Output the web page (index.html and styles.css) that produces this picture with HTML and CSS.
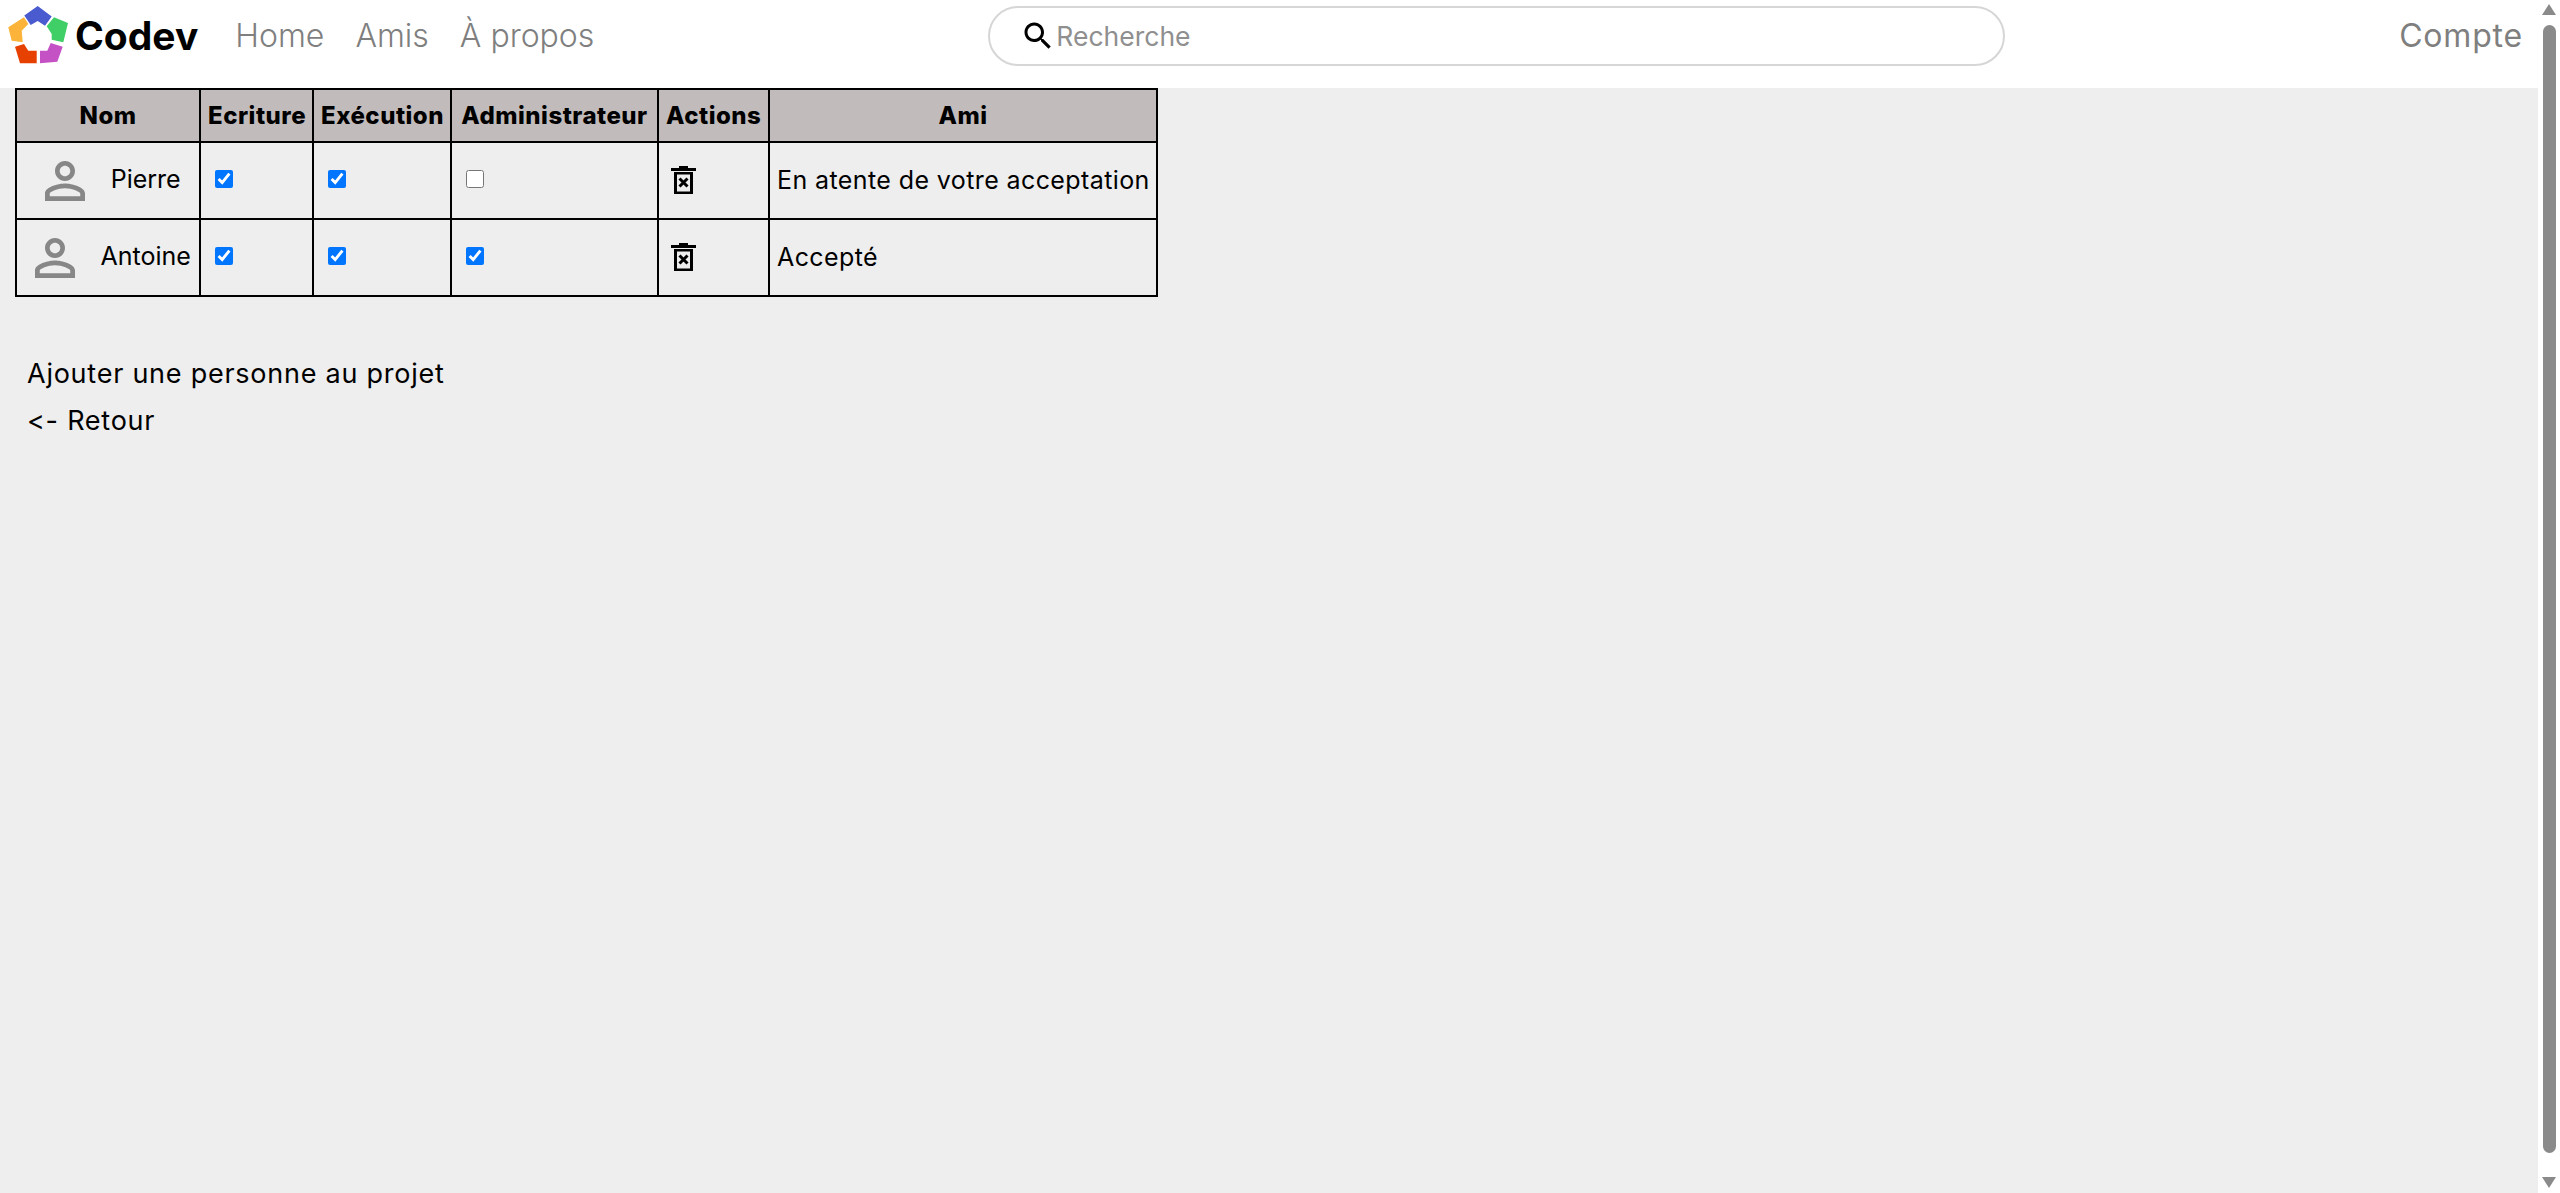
FILE: index.html
```html
<!DOCTYPE html>
<html lang="fr">
<head>
    <meta charset="UTF-8">
    <meta name="viewport" content="width=device-width, initial-scale=1.0">
    <title>Codev</title>
    <link rel="stylesheet" href="styles.css">
</head>
<body>
    <div class="page">
        <header class="navbar">
            <a class="brand" href="#">
                <svg class="brand-logo" viewBox="0 0 60 60" aria-hidden="true">
                    <polygon fill="#4a5bd0" points="29.7,0 43.7,10.5 37,19.7 29.7,15 22.7,19 16.3,9.5"/>
                    <polygon fill="#3fcf66" points="46,11.3 60,17 55.3,36.3 43.7,33.7 43.7,28 38.7,20.3"/>
                    <polygon fill="#fbb33a" points="16,11.3 20.3,18 13.7,24.7 14.7,36.3 3.7,34.7 0.3,21.3"/>
                    <polygon fill="#e64100" points="7,40.7 16,38 20.3,44.7 28.7,44.7 28.7,57.3 12,57.3"/>
                    <polygon fill="#c552c5" points="32,44.7 39.3,44.7 42.7,37 54.7,40.7 49.3,55.7 32,57.3"/>
                </svg>
                <span class="brand-name">Codev</span>
            </a>
            <nav class="nav-links">
                <a href="#">Home</a>
                <a href="#">Amis</a>
                <a href="#">À propos</a>
            </nav>
            <div class="search">
                <svg class="search-icon" viewBox="0 0 24 24" aria-hidden="true">
                    <path d="M15.5 14h-.79l-.28-.27C15.41 12.59 16 11.11 16 9.5 16 5.91 13.09 3 9.5 3S3 5.91 3 9.5 5.91 16 9.5 16c1.61 0 3.09-.59 4.23-1.57l.27.28v.79l5 4.99L20.49 19l-4.99-5zm-6 0C7.01 14 5 11.99 5 9.5S7.01 5 9.5 5 14 7.01 14 9.5 11.99 14 9.5 14z"/>
                </svg>
                <input class="search-input" type="text" placeholder="Recherche">
            </div>
            <a class="account" href="#">Compte</a>
        </header>

        <main class="content">
            <table class="members">
                <thead>
                    <tr>
                        <th class="col-name">Nom</th>
                        <th class="col-write">Ecriture</th>
                        <th class="col-exec">Exécution</th>
                        <th class="col-admin">Administrateur</th>
                        <th class="col-actions">Actions</th>
                        <th class="col-friend">Ami</th>
                    </tr>
                </thead>
                <tbody>
                    <tr>
                        <td class="member">
                            <svg class="avatar" viewBox="0 0 24 24" aria-hidden="true">
                                <path d="M12 5.9c1.16 0 2.1.94 2.1 2.1s-.94 2.1-2.1 2.1S9.9 9.16 9.9 8s.94-2.1 2.1-2.1m0 9c2.97 0 6.1 1.46 6.1 2.1v1.1H5.9V17c0-.64 3.13-2.1 6.1-2.1M12 4C9.79 4 8 5.79 8 8s1.79 4 4 4 4-1.79 4-4-1.79-4-4-4zm0 9c-2.67 0-8 1.34-8 4v3h16v-3c0-2.66-5.33-4-8-4z"/>
                            </svg>
                            <span class="member-name">Pierre</span>
                        </td>
                        <td><input type="checkbox" checked></td>
                        <td><input type="checkbox" checked></td>
                        <td><input type="checkbox"></td>
                        <td>
                            <svg class="trash" viewBox="0 0 25 28" aria-hidden="true">
                                <path d="M8 0h9v2h8v3H0V2h8zM3 6h19v22H3zm3 2.500v17h13v-17z" fill-rule="evenodd"/>
                                <path d="M8.500 12.500l8 8m0-8l-8 8" class="trash-cross"/>
                            </svg>
                        </td>
                        <td>En atente de votre acceptation</td>
                    </tr>
                    <tr>
                        <td class="member">
                            <svg class="avatar" viewBox="0 0 24 24" aria-hidden="true">
                                <path d="M12 5.9c1.16 0 2.1.94 2.1 2.1s-.94 2.1-2.1 2.1S9.9 9.16 9.9 8s.94-2.1 2.1-2.1m0 9c2.97 0 6.1 1.46 6.1 2.1v1.1H5.9V17c0-.64 3.13-2.1 6.1-2.1M12 4C9.79 4 8 5.79 8 8s1.79 4 4 4 4-1.79 4-4-1.79-4-4-4zm0 9c-2.67 0-8 1.34-8 4v3h16v-3c0-2.66-5.33-4-8-4z"/>
                            </svg>
                            <span class="member-name">Antoine</span>
                        </td>
                        <td><input type="checkbox" checked></td>
                        <td><input type="checkbox" checked></td>
                        <td><input type="checkbox" checked></td>
                        <td>
                            <svg class="trash" viewBox="0 0 25 28" aria-hidden="true">
                                <path d="M8 0h9v2h8v3H0V2h8zM3 6h19v22H3zm3 2.500v17h13v-17z" fill-rule="evenodd"/>
                                <path d="M8.500 12.500l8 8m0-8l-8 8" class="trash-cross"/>
                            </svg>
                        </td>
                        <td>Accepté</td>
                    </tr>
                </tbody>
            </table>

            <div class="links">
                <a href="#">Ajouter une personne au projet</a>
                <a href="#">&lt;- Retour</a>
            </div>
        </main>
    </div>

    <div class="scrollbar" aria-hidden="true">
        <span class="arrow-up"></span>
        <span class="thumb"></span>
        <span class="arrow-down"></span>
    </div>
</body>
</html>
```

FILE: styles.css
```css
* {
    box-sizing: border-box;
}
html, body {
    height: 100%;
}
body {
    margin: 0;
    display: flex;
    overflow: hidden;
    font-family: Inter, "Open Sans", sans-serif;
    font-variant-ligatures: none;
    font-feature-settings: "calt" 0;
    background-color: #eeeeee;
    color: black;
}
a {
    color: inherit;
    text-decoration: none;
}
.page {
    flex: 1;
    min-width: 0;
}

/* barre du haut */
.navbar {
    display: flex;
    align-items: center;
    height: 88px;
    padding-bottom: 17px;
    background-color: white;
    white-space: nowrap;
}
.brand {
    display: flex;
    align-items: center;
    margin-left: 8px;
}
.brand-logo {
    width: 60px;
    height: 60px;
}
.brand-name {
    margin-left: 7px;
    font-size: 39px;
    font-weight: 700;
}
.nav-links {
    display: flex;
    gap: 31px;
    margin-left: 37px;
    font-size: 32px;
    font-weight: 300;
    color: #7f7f7f;
}
.search {
    display: flex;
    align-items: center;
    width: 1017px;
    height: 60px;
    margin-left: 394px;
    padding-left: 30px;
    background-color: white;
    border: 2px solid #d6d6d6;
    border-radius: 30px;
}
.search-icon {
    flex: none;
    width: 36px;
    height: 36px;
}
.search-input {
    flex: 1;
    padding: 0;
    border: none;
    outline: none;
    background: none;
    font-family: inherit;
    font-size: 26.500px;
}
.search-input::placeholder {
    color: #8f8f8f;
}
.account {
    margin-left: auto;
    margin-right: 15px;
    font-size: 32px;
    letter-spacing: 0.800px;
    color: #7f7f7f;
}

/* tableau des membres */
.content {
    padding: 0 15px;
}
.members {
    table-layout: fixed;
    border-collapse: collapse;
    width: 1143px;
    font-size: 25px;
    letter-spacing: 0.400px;
}
.members th,
.members td {
    border: 2px solid black;
    padding: 0 7px;
    white-space: nowrap;
}
.members th {
    height: 53px;
    background-color: #c2bbbb;
    font-weight: 800;
    font-size: 24px;
    letter-spacing: 0.500px;
    text-align: center;
}
.members td {
    height: 77px;
    padding-bottom: 1px;
}
.members input {
    display: block;
    width: 18px;
    height: 18px;
    margin: -2px 0 0 7px;
    accent-color: #0075ff;
}
.col-name {
    width: 184px;
}
.col-write {
    width: 113px;
}
.col-exec {
    width: 138px;
}
.col-admin {
    width: 207px;
}
.col-actions {
    width: 111px;
}
.members td.member {
    text-align: center;
    padding: 0;
}
.member-name {
    letter-spacing: 0;
}
.avatar {
    width: 60px;
    height: 60px;
    margin-right: 8px;
    vertical-align: middle;
    fill: #878787;
}
.trash {
    display: block;
    width: 25px;
    height: 28px;
    margin-left: 5px;
}
.trash-cross {
    fill: none;
    stroke: black;
    stroke-width: 3;
}

.links {
    display: flex;
    flex-direction: column;
    gap: 13px;
    margin-top: 60px;
    padding-left: 12px;
    font-size: 27px;
    letter-spacing: 0.750px;
    line-height: 34px;
}

/* ascenseur */
.scrollbar {
    flex: none;
    display: flex;
    flex-direction: column;
    align-items: center;
    width: 22px;
    padding: 4px 0 5px;
    background-color: white;
}
.thumb {
    flex: 1;
    width: 13px;
    margin: 10px 0 24px;
    border-radius: 7px;
    background-color: #8a8a8a;
}
.arrow-up,
.arrow-down {
    width: 0;
    height: 0;
    border-left: 7px solid transparent;
    border-right: 7px solid transparent;
}
.arrow-up {
    border-bottom: 11px solid #8a8a8a;
}
.arrow-down {
    border-top: 11px solid #8a8a8a;
}
```
